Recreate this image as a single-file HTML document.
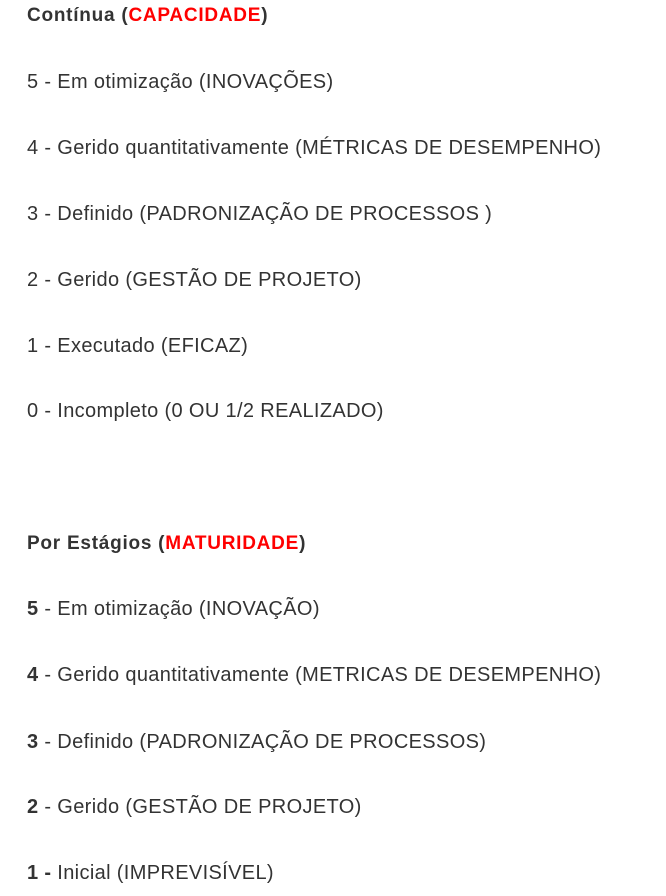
<!DOCTYPE html>
<html><head><meta charset="utf-8"><style>
html,body{margin:0;padding:0;background:#fff;width:666px;height:896px;overflow:hidden}
body{font-family:"Liberation Sans",sans-serif;color:#333;font-size:20px;letter-spacing:0.35px;position:relative}
.l{position:absolute;left:27px;height:32px;line-height:32px;white-space:nowrap}
.b{font-weight:bold;font-size:19px;letter-spacing:0.75px}
.r{color:#f00}
</style></head><body>
<div class="l b" style="top:0px">Contínua (<span class="r">CAPACIDADE</span>)</div>
<div class="l" style="top:66px">5 - Em otimização (INOVAÇÕES)</div>
<div class="l" style="top:132px">4 - Gerido quantitativamente (MÉTRICAS DE DESEMPENHO)</div>
<div class="l" style="top:198px">3 - Definido (PADRONIZAÇÃO DE PROCESSOS )</div>
<div class="l" style="top:264px">2 - Gerido (GESTÃO DE PROJETO)</div>
<div class="l" style="top:330px">1 - Executado (EFICAZ)</div>
<div class="l" style="top:395px">0 - Incompleto (0 OU 1/2 REALIZADO)</div>
<div class="l b" style="top:528px">Por Estágios (<span class="r">MATURIDADE</span>)</div>
<div class="l" style="top:593px"><b>5</b> - Em otimização (INOVAÇÃO)</div>
<div class="l" style="top:659px"><b>4</b> - Gerido quantitativamente (METRICAS DE DESEMPENHO)</div>
<div class="l" style="top:726px"><b>3</b> - Definido (PADRONIZAÇÃO DE PROCESSOS)</div>
<div class="l" style="top:791px"><b>2</b> - Gerido (GESTÃO DE PROJETO)</div>
<div class="l" style="top:857px"><b>1 -</b> Inicial (IMPREVISÍVEL)</div>
</body></html>
